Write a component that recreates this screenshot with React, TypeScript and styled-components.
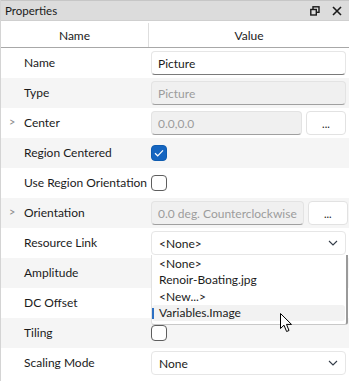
import styled, { createGlobalStyle } from "styled-components";

const GlobalStyle = createGlobalStyle`
  html, body {
    margin: 0;
    padding: 0;
    background: #ffffff;
  }
  body {
    font-family: "Segoe UI", Lato, "Open Sans", sans-serif;
    font-size: 12px;
    color: #1b1b1b;
  }
`;

const Panel = styled.div`
  position: relative;
  width: 349px;
  height: 381px;
  overflow: hidden;
  background: #ffffff;
  border-left: 1px solid #d4d4d4;
  box-sizing: border-box;
`;

const TitleBar = styled.div`
  height: 21px;
  display: flex;
  align-items: center;
  justify-content: space-between;
  padding: 0 5px 0 4px;
  background: #dcdcdc;
  border-top: 1px solid #c6c6c6;
  border-bottom: 1px solid #cfcfcf;
  box-sizing: border-box;
  font-size: 11.5px;
  color: #1a1a1a;
`;

const TitleIcons = styled.div`
  display: flex;
  align-items: center;
  gap: 12px;
  padding-right: 2px;
`;

const Header = styled.div`
  margin-top: 2px;
  height: 24px;
  display: grid;
  grid-template-columns: 148px 1fr;
  border-bottom: 1px solid #a8a8a8;
`;

const HeaderCell = styled.div<{ $divider?: boolean }>`
  display: flex;
  align-items: center;
  justify-content: center;
  border-right: ${(p) => (p.$divider ? "1px solid #dedede" : "none")};
  color: #1b1b1b;
`;

const Row = styled.div<{ $alt?: boolean }>`
  position: relative;
  height: 30px;
  display: grid;
  grid-template-columns: 150px 1fr;
  align-items: center;
  background: ${(p) => (p.$alt ? "#f5f5f5" : "#ffffff")};
`;

const NameCell = styled.div`
  position: relative;
  padding-left: 23px;
  padding-bottom: 1px;
  white-space: nowrap;
  color: #1b1b1b;
`;

const Expander = styled.span`
  position: absolute;
  left: 8px;
  top: 0;
  color: #8a8a8a;
  font-size: 11px;
`;

const ValueCell = styled.div`
  position: relative;
  display: flex;
  align-items: center;
  gap: 4px;
  padding-right: 3px;
`;

const TextBox = styled.div<{ $disabled?: boolean }>`
  flex: 1;
  height: 24px;
  box-sizing: border-box;
  display: flex;
  align-items: center;
  padding: 0 6px;
  border: 1px solid ${(p) => (p.$disabled ? "#e3e3e3" : "#e6e6e6")};
  border-bottom-color: ${(p) => (p.$disabled ? "#a0a0a0" : "#7a7a7a")};
  border-radius: 4px;
  background: ${(p) => (p.$disabled ? "#f0f0f0" : "#ffffff")};
  color: ${(p) => (p.$disabled ? "#9c9c9c" : "#1b1b1b")};
  white-space: nowrap;
  overflow: hidden;
`;

const EllipsisButton = styled.div`
  width: 40px;
  height: 24px;
  box-sizing: border-box;
  border: 1px solid #e2e2e2;
  border-radius: 4px;
  background: #ffffff;
  display: flex;
  align-items: flex-end;
  justify-content: center;
  padding-bottom: 5px;
  font-size: 11px;
  line-height: 1;
`;

const Select = styled.div`
  flex: 1;
  height: 24px;
  box-sizing: border-box;
  display: flex;
  align-items: center;
  justify-content: space-between;
  padding: 0 7px 0 7px;
  border: 1px solid #e6e6e6;
  border-radius: 4px;
  background: #ffffff;
`;

const CheckBox = styled.div<{ $checked?: boolean }>`
  width: 16px;
  height: 16px;
  box-sizing: border-box;
  border-radius: 4px;
  border: 1px solid ${(p) => (p.$checked ? "#0f5cb0" : "#5e5e5e")};
  background: ${(p) => (p.$checked ? "#1565c0" : "#ffffff")};
  display: flex;
  align-items: center;
  justify-content: center;
`;

const DropList = styled.div`
  position: absolute;
  left: 0;
  right: 1px;
  top: 24px;
  height: 70px;
  box-sizing: border-box;
  background: #ffffff;
  border-left: 1px solid #e2e2e2;
  border-right: 2px solid #9a9a9a;
  border-bottom: 1px solid #c8c8c8;
  border-radius: 0 0 3px 3px;
  z-index: 5;
`;

const DropItem = styled.div<{ $selected?: boolean }>`
  position: relative;
  height: 16.5px;
  display: flex;
  align-items: center;
  padding-left: 7px;
  margin-right: 1px;
  border-radius: 3px;
  background: ${(p) => (p.$selected ? "#f2f2f2" : "transparent")};

  &::before {
    content: "";
    display: ${(p) => (p.$selected ? "block" : "none")};
    position: absolute;
    left: 0;
    top: 3px;
    bottom: 2px;
    width: 2px;
    background: #2b6fc2;
  }
`;

const Cursor = styled.svg`
  position: absolute;
  left: 279px;
  top: 313px;
  z-index: 10;
`;

const Chevron = () => (
  <svg width="10" height="6" viewBox="0 0 10 6">
    <path d="M1 1 L5 5 L9 1" fill="none" stroke="#333c48" strokeWidth="1.1" />
  </svg>
);

const Check = () => (
  <svg width="12" height="10" viewBox="0 0 12 10">
    <path d="M2 5.2 L4.7 7.8 L10 2.3" fill="none" stroke="#ffffff" strokeWidth="1.2" />
  </svg>
);

type Prop = {
  name: string;
  expandable?: boolean;
  kind: "text" | "disabled" | "textButton" | "check" | "select" | "none";
  value?: string;
  checked?: boolean;
  open?: boolean;
};

const props: Prop[] = [
  { name: "Name", kind: "text", value: "Picture" },
  { name: "Type", kind: "disabled", value: "Picture" },
  { name: "Center", expandable: true, kind: "textButton", value: "0.0,0.0" },
  { name: "Region Centered", kind: "check", checked: true },
  { name: "Use Region Orientation", kind: "check" },
  { name: "Orientation", expandable: true, kind: "textButton", value: "0.0 deg. Counterclockwise" },
  { name: "Resource Link", kind: "select", value: "<None>", open: true },
  { name: "Amplitude", kind: "none" },
  { name: "DC Offset", kind: "none" },
  { name: "Tiling", kind: "check" },
  { name: "Scaling Mode", kind: "select", value: "None" },
];

const options = ["<None>", "Renoir-Boating.jpg", "<New...>", "Variables.Image"];

const renderValue = (p: Prop) => {
  switch (p.kind) {
    case "text":
      return <TextBox>{p.value}</TextBox>;
    case "disabled":
      return <TextBox $disabled>{p.value}</TextBox>;
    case "textButton":
      return (
        <>
          <TextBox $disabled>{p.value}</TextBox>
          <EllipsisButton>...</EllipsisButton>
        </>
      );
    case "check":
      return <CheckBox $checked={p.checked}>{p.checked && <Check />}</CheckBox>;
    case "select":
      return (
        <>
          <Select>
            <span>{p.value}</span>
            <Chevron />
          </Select>
          {p.open && (
            <DropList>
              {options.map((o, i) => (
                <DropItem key={o} $selected={i === options.length - 1}>
                  {o}
                </DropItem>
              ))}
            </DropList>
          )}
        </>
      );
    default:
      return null;
  }
};

export default function App() {
  return (
    <>
      <GlobalStyle />
      <Panel>
        <TitleBar>
          <span>Properties</span>
          <TitleIcons>
            <svg width="10" height="10" viewBox="0 0 10 10">
              <rect x="3" y="0.8" width="6" height="5.5" fill="none" stroke="#1a1a1a" strokeWidth="1.4" />
              <rect x="0.8" y="3.5" width="5.5" height="5.5" fill="#dcdcdc" stroke="#1a1a1a" strokeWidth="1.4" />
            </svg>
            <svg width="10" height="10" viewBox="0 0 10 10">
              <path d="M1 1 L9 9 M9 1 L1 9" stroke="#1a1a1a" strokeWidth="1.6" />
            </svg>
          </TitleIcons>
        </TitleBar>
        <Header>
          <HeaderCell $divider>Name</HeaderCell>
          <HeaderCell>Value</HeaderCell>
        </Header>
        {props.map((p, i) => (
          <Row key={p.name} $alt={i % 2 === 1}>
            <NameCell>
              {p.expandable && <Expander>&gt;</Expander>}
              {p.name}
            </NameCell>
            <ValueCell>{renderValue(p)}</ValueCell>
          </Row>
        ))}
        <Cursor width="14" height="20" viewBox="0 0 14 20">
          <path
            d="M0.5 0.5 L0.5 15.5 L4 12.2 L6.6 18.5 L9 17.5 L6.5 11.4 L11.5 11.4 Z"
            fill="#ffffff"
            stroke="#000000"
            strokeWidth="1"
            strokeLinejoin="round"
          />
        </Cursor>
      </Panel>
    </>
  );
}
